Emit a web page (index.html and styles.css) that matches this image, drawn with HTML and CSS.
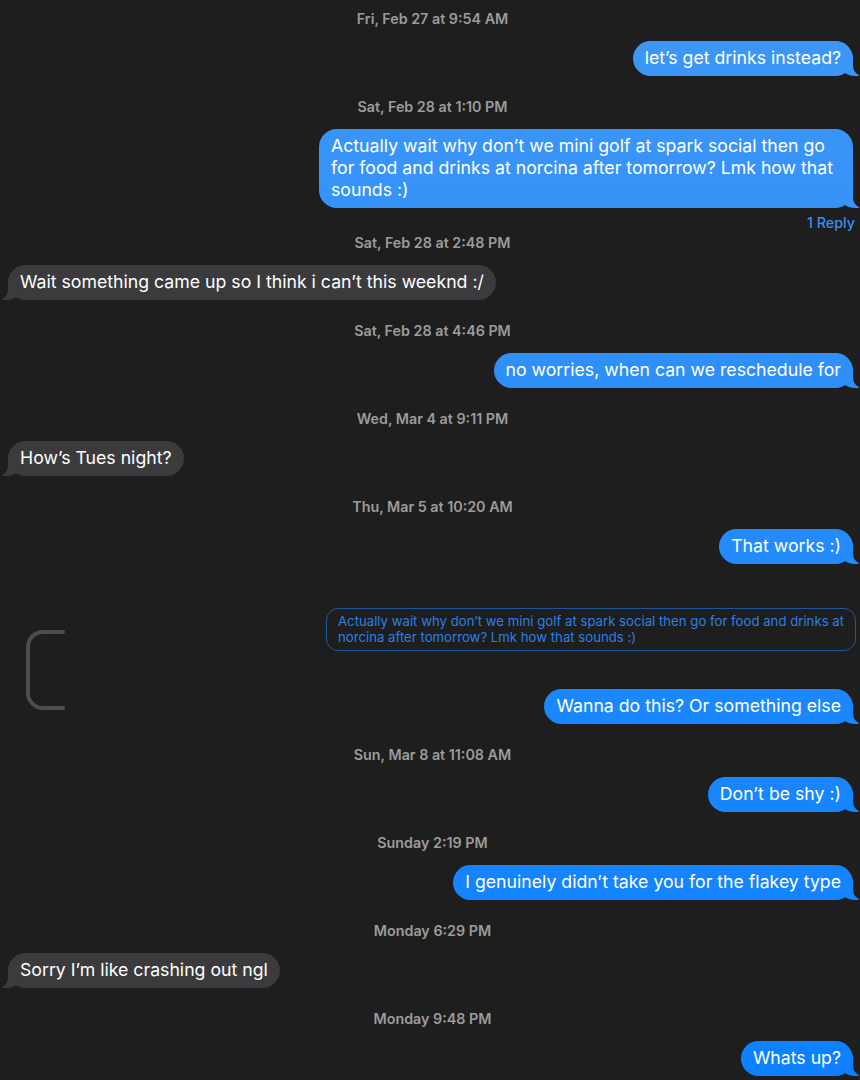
FILE: index.html
```html
<!DOCTYPE html>
<html lang="en">
<head>
<meta charset="utf-8">
<title>Messages</title>
<link rel="stylesheet" href="styles.css">
</head>
<body>
<main class="thread">
  <div class="ts first">Fri, Feb 27 at 9:54 AM</div>
  <div class="bubble sent">let’s get drinks instead?</div>

  <div class="ts">Sat, Feb 28 at 1:10 PM</div>
  <div class="bubble sent multi">Actually wait why don’t we mini golf at spark social then go for food and drinks at norcina after tomorrow? Lmk how that sounds :)</div>
  <div class="reply-count">1 Reply</div>

  <div class="ts after-reply">Sat, Feb 28 at 2:48 PM</div>
  <div class="bubble recv">Wait something came up so I think i can’t this weeknd :/</div>

  <div class="ts">Sat, Feb 28 at 4:46 PM</div>
  <div class="bubble sent">no worries, when can we reschedule for</div>

  <div class="ts">Wed, Mar 4 at 9:11 PM</div>
  <div class="bubble recv">How’s Tues night?</div>

  <div class="ts">Thu, Mar 5 at 10:20 AM</div>
  <div class="bubble sent">That works :)</div>

  <section class="reply-thread">
    <svg class="bracket" width="42" height="82" viewBox="0 0 42 82" aria-hidden="true">
      <path d="M39 3 H19 A15 15 0 0 0 4 18 V64 A15 15 0 0 0 19 79 H39" fill="none" stroke="#4d4d4d" stroke-width="4" stroke-linecap="round"/>
    </svg>
    <div class="reply-col">
      <div class="quoted">Actually wait why don’t we mini golf at spark social then go for food and drinks at norcina after tomorrow? Lmk how that sounds :)</div>
      <div class="bubble sent in-reply">Wanna do this? Or something else</div>
    </div>
  </section>

  <div class="ts">Sun, Mar 8 at 11:08 AM</div>
  <div class="bubble sent">Don’t be shy :)</div>

  <div class="ts">Sunday 2:19 PM</div>
  <div class="bubble sent">I genuinely didn’t take you for the flakey type</div>

  <div class="ts">Monday 6:29 PM</div>
  <div class="bubble recv">Sorry I’m like crashing out ngl</div>

  <div class="ts">Monday 9:48 PM</div>
  <div class="bubble sent">Whats up?</div>
</main>
</body>
</html>
```

FILE: styles.css
```css
html, body {
  margin: 0;
  padding: 0;
  background: #1e1e1e;
}

body {
  font-family: "Inter", "Liberation Sans", Arial, sans-serif;
  color: #fff;
  -webkit-font-smoothing: antialiased;
}

.thread {
  display: flex;
  flex-direction: column;
  padding: 0 7px 20px 8px;
}

.ts {
  align-self: center;
  margin: 21px 0 12px;
  height: 20px;
  line-height: 20px;
  font-size: 14.3px;
  font-weight: 600;
  color: #9b9b9b;
  padding-left: 4px;
}

.ts.first {
  margin-top: 9px;
}

.ts.after-reply {
  margin-top: 2px;
}

.bubble {
  position: relative;
  isolation: isolate;
  max-width: 526px;
  box-sizing: border-box;
  padding: 6px 12px 7px;
  border-radius: 18px;
  font-size: 17.7px;
  line-height: 22px;
  color: #fff;
}

.bubble.multi {
  max-width: 534px;
  padding-right: 10px;
}

.bubble.sent {
  align-self: flex-end;
  background: linear-gradient(to bottom, #3e97f6 0%, #2f8ff9 35%, #1d88fd 60%, #0e80ff 100%) fixed;
}

.bubble.recv {
  align-self: flex-start;
  background: #3b3b3d;
}

.bubble::before,
.bubble::after {
  content: "";
  position: absolute;
  bottom: 0;
  height: 20px;
  z-index: -1;
}

.bubble.sent::before {
  right: -6px;
  width: 20px;
  background: inherit;
  border-bottom-left-radius: 16px 14px;
}

.bubble.sent::after {
  right: -26px;
  width: 26px;
  background: #1e1e1e;
  border-bottom-left-radius: 10px;
}

.bubble.recv::before {
  left: -6px;
  width: 20px;
  background: inherit;
  border-bottom-right-radius: 16px 14px;
}

.bubble.recv::after {
  left: -26px;
  width: 26px;
  background: #1e1e1e;
  border-bottom-right-radius: 10px;
}

.reply-count {
  align-self: flex-end;
  margin-top: 7px;
  margin-right: -2px;
  height: 16px;
  line-height: 16px;
  font-size: 14.3px;
  font-weight: 500;
  color: #3a8ef0;
}

.reply-thread {
  display: flex;
  align-items: flex-start;
  margin-top: 44px;
}

.bracket {
  flex: none;
  margin: 21px 0 0 16px;
}

.reply-col {
  flex: 1;
  display: flex;
  flex-direction: column;
  align-items: flex-end;
}

.quoted {
  position: relative;
  box-sizing: border-box;
  width: 530px;
  margin-right: -3px;
  padding: 4px 10px 5px 11px;
  border: 1px solid #1d579b;
  border-radius: 12px;
  font-size: 13.2px;
  line-height: 16px;
  color: #2d7fe2;
}

.bubble.in-reply {
  margin-top: 38px;
}
```
